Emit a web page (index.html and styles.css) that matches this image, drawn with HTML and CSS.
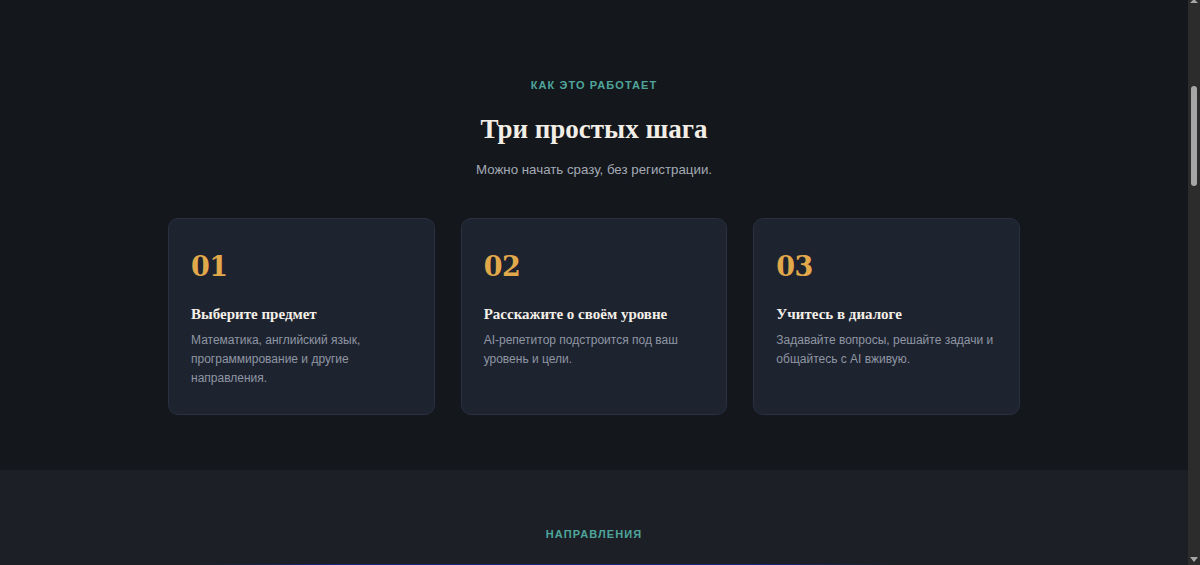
FILE: index.html
```html
<!DOCTYPE html>
<html lang="ru">
<head>
  <meta charset="UTF-8">
  <title>Как это работает</title>
  <link rel="stylesheet" href="styles.css">
</head>
<body>

<section class="steps">
  <p class="eyebrow">Как это работает</p>
  <h2 class="section-title">Три простых шага</h2>
  <p class="section-sub">Можно начать сразу, без регистрации.</p>

  <div class="step-grid">
    <div class="step-card">
      <div class="step-num">01</div>
      <h3 class="step-title">Выберите предмет</h3>
      <p class="step-text">Математика, английский язык, программирование и другие направления.</p>
    </div>
    <div class="step-card">
      <div class="step-num">02</div>
      <h3 class="step-title">Расскажите о своём уровне</h3>
      <p class="step-text">AI-репетитор подстроится под ваш уровень и цели.</p>
    </div>
    <div class="step-card">
      <div class="step-num">03</div>
      <h3 class="step-title">Учитесь в диалоге</h3>
      <p class="step-text">Задавайте вопросы, решайте задачи и общайтесь с AI вживую.</p>
    </div>
  </div>
</section>

<section class="subjects">
  <p class="eyebrow">Направления</p>
  <div class="glow"></div>
</section>

<!-- page scrollbar as it shows in the screenshot -->
<div class="fake-scroll">
  <span class="arrow up"></span>
  <span class="thumb"></span>
  <span class="arrow down"></span>
</div>

</body>
</html>
```

FILE: styles.css
```css
body {
  margin: 0;
  padding-right: 12px;
  background: #14171c;
  font-family: "Liberation Sans", Arial, sans-serif;
  color: #e8e4dc;
}
.eyebrow {
  margin: 0;
  font-size: 11px;
  font-weight: 700;
  letter-spacing: 1.1px;
  text-transform: uppercase;
  color: #4fa59b;
  text-align: center;
  line-height: 14px;
}
.steps {
  padding: 78px 0 55px;
}
.section-title {
  margin: 19px 0 0;
  font-family: "Liberation Serif", "Times New Roman", serif;
  font-size: 27px;
  font-weight: 700;
  line-height: 36px;
  text-align: center;
  color: #f2eee6;
}
.section-sub {
  margin: 13px 0 0;
  font-size: 13.3px;
  line-height: 20px;
  text-align: center;
  color: #a3aab5;
}
.step-grid {
  display: grid;
  grid-template-columns: repeat(3, 1fr);
  gap: 26px;
  width: 852px;
  margin: 38px auto 0;
}
.step-card {
  background: #1e2330;
  border: 1px solid #283041;
  border-radius: 10px;
  padding: 32px 22px 20px;
  min-height: 197px;
  box-sizing: border-box;
}
.step-num {
  font-family: "DejaVu Serif", "Liberation Serif", serif;
  font-size: 27px;
  font-weight: 700;
  line-height: 31px;
  letter-spacing: -0.5px;
  color: #e2a94b;
}
.step-title {
  margin: 22px 0 0;
  font-family: "Liberation Serif", "Times New Roman", serif;
  font-size: 15px;
  font-weight: 700;
  line-height: 20px;
  color: #f4f0e8;
}
.step-text {
  margin: 7px 0 0;
  font-size: 12px;
  line-height: 19px;
  color: #8e96a3;
}
.subjects {
  background: #1c2026;
  padding: 57px 0 0;
  min-height: 1800px;
}
.glow {
  height: 3px;
  width: 700px;
  margin: 23px 0 0 calc(50% - 398px);
  background: linear-gradient(90deg, rgba(24, 40, 120, 0), rgba(24, 40, 130, 0.9) 20%, rgba(24, 40, 130, 0.9) 80%, rgba(24, 40, 120, 0));
}

.fake-scroll {
  position: fixed;
  top: 0;
  right: 0;
  width: 12px;
  height: 100vh;
  background: #2c2c2c;
}
.fake-scroll .thumb {
  position: absolute;
  left: 3px;
  top: 86px;
  width: 6px;
  height: 100px;
  border-radius: 3px;
  background: #a6a6a6;
}
.fake-scroll .arrow {
  position: absolute;
  left: 2px;
  width: 0;
  height: 0;
  border-left: 4px solid transparent;
  border-right: 4px solid transparent;
}
.fake-scroll .up {
  top: -1px;
  border-bottom: 4px solid #a6a6a6;
}
.fake-scroll .down {
  bottom: 3px;
  border-top: 5px solid #a6a6a6;
}
```
